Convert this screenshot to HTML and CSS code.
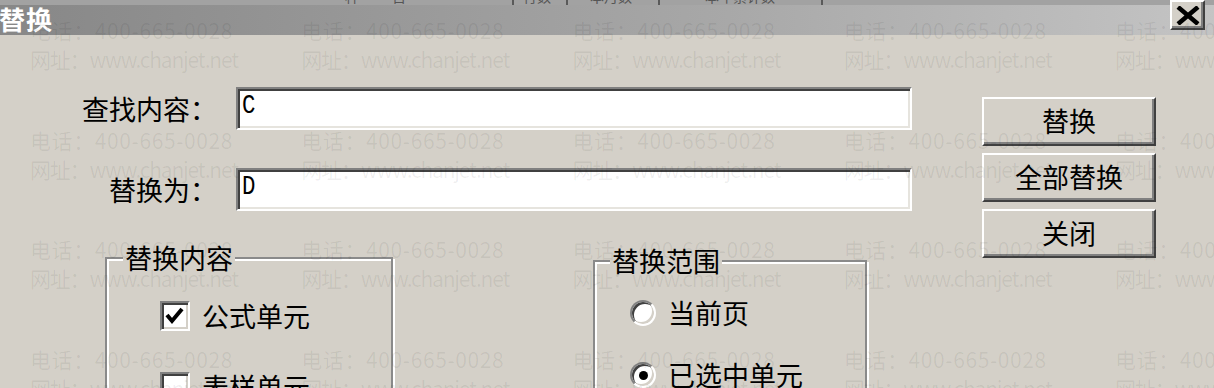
FILE: index.html
```html
<!DOCTYPE html>
<html lang="zh-CN">
<head>
<meta charset="utf-8">
<title>替换</title>
<link rel="stylesheet" href="styles.css">
</head>
<body>
<div class="header">
  <div class="strip">
    <span class="st st-a">种</span><span class="st st-b">百</span><span class="sep sep-a"></span><span class="st st-c">行数</span><span class="sep sep-b"></span><span class="st st-d">本月数</span><span class="sep sep-c"></span><span class="st st-e">本年累计数</span><span class="sep sep-d"></span>
  </div>
  <div class="title">替换</div>
  <button class="close" type="button" aria-label="关闭">
    <svg width="26" height="19" viewBox="0 0 26 19"><path d="M3 1 L23 18 M23 1 L3 18" stroke="#000" stroke-width="4.5" fill="none"/></svg>
  </button>
</div>

<div class="main">
  <div class="left">
    <div class="field">
      <span class="label">查找内容：</span>
      <div class="input"><span class="val">C</span></div>
    </div>
    <div class="field field-2">
      <span class="label">替换为：</span>
      <div class="input"><span class="val">D</span></div>
    </div>
    <div class="groups">
      <fieldset class="group g1">
        <legend class="g1-legend">替换内容</legend>
        <div class="opts">
          <div class="opt">
            <span class="check"><svg width="26" height="26" viewBox="0 0 26 26"><path d="M5 12 L10 18 L20 6" stroke="#000" stroke-width="4" fill="none"/></svg></span>
            <span class="opt-text">公式单元</span>
          </div>
          <div class="opt">
            <span class="check"></span>
            <span class="opt-text">表样单元</span>
          </div>
        </div>
      </fieldset>
      <fieldset class="group g2">
        <legend class="g2-legend">替换范围</legend>
        <div class="radios">
          <div class="opt radio-row">
            <span class="radio"></span>
            <span class="opt-text">当前页</span>
          </div>
          <div class="opt radio-row">
            <span class="radio on"><span class="dot"></span></span>
            <span class="opt-text">已选中单元</span>
          </div>
        </div>
      </fieldset>
    </div>
  </div>
  <div class="buttons">
    <button class="btn" type="button">替换</button>
    <button class="btn" type="button">全部替换</button>
    <button class="btn" type="button">关闭</button>
  </div>
</div>

<div class="watermark">
  <div class="wm"><div class="tel">电话：400-665-0028</div><div class="web">网址：www.chanjet.net</div></div>
  <div class="wm"><div class="tel">电话：400-665-0028</div><div class="web">网址：www.chanjet.net</div></div>
  <div class="wm"><div class="tel">电话：400-665-0028</div><div class="web">网址：www.chanjet.net</div></div>
  <div class="wm"><div class="tel">电话：400-665-0028</div><div class="web">网址：www.chanjet.net</div></div>
  <div class="wm"><div class="tel">电话：400-665-0028</div><div class="web">网址：www.chanjet.net</div></div>
  <div class="wm"><div class="tel">电话：400-665-0028</div><div class="web">网址：www.chanjet.net</div></div>
  <div class="wm"><div class="tel">电话：400-665-0028</div><div class="web">网址：www.chanjet.net</div></div>
  <div class="wm"><div class="tel">电话：400-665-0028</div><div class="web">网址：www.chanjet.net</div></div>
  <div class="wm"><div class="tel">电话：400-665-0028</div><div class="web">网址：www.chanjet.net</div></div>
  <div class="wm"><div class="tel">电话：400-665-0028</div><div class="web">网址：www.chanjet.net</div></div>
  <div class="wm"><div class="tel">电话：400-665-0028</div><div class="web">网址：www.chanjet.net</div></div>
  <div class="wm"><div class="tel">电话：400-665-0028</div><div class="web">网址：www.chanjet.net</div></div>
  <div class="wm"><div class="tel">电话：400-665-0028</div><div class="web">网址：www.chanjet.net</div></div>
  <div class="wm"><div class="tel">电话：400-665-0028</div><div class="web">网址：www.chanjet.net</div></div>
  <div class="wm"><div class="tel">电话：400-665-0028</div><div class="web">网址：www.chanjet.net</div></div>
  <div class="wm"><div class="tel">电话：400-665-0028</div><div class="web">网址：www.chanjet.net</div></div>
  <div class="wm"><div class="tel">电话：400-665-0028</div><div class="web">网址：www.chanjet.net</div></div>
  <div class="wm"><div class="tel">电话：400-665-0028</div><div class="web">网址：www.chanjet.net</div></div>
  <div class="wm"><div class="tel">电话：400-665-0028</div><div class="web">网址：www.chanjet.net</div></div>
  <div class="wm"><div class="tel">电话：400-665-0028</div><div class="web">网址：www.chanjet.net</div></div>
</div>
</body>
</html>
```

FILE: styles.css
```css
* { box-sizing: border-box; }

html, body {
  margin: 0;
  padding: 0;
}

body {
  width: 1214px;
  height: 388px;
  overflow: hidden;
  position: relative;
  background: #d4d0c8;
  color: #000;
  font-family: "Noto Sans CJK SC", "Liberation Sans", sans-serif;
}

/* ---------- title bar ---------- */
.header {
  height: 35px;
  display: grid;
  grid-template-columns: 1fr 35px;
  grid-template-rows: 5px 30px;
  padding-right: 9px;
  background:
    linear-gradient(#a2a2a2 0, #a2a2a2 5px, transparent 5px),
    linear-gradient(to right, #878787, #a8a8a8 60%, #c4c4c4);
}

.strip {
  grid-row: 1;
  grid-column: 1;
  display: flex;
  overflow: hidden;
  font-size: 14px;
  line-height: 14px;
  color: #555;
}
.st { margin-top: -11px; white-space: nowrap; }
.sep { width: 2px; height: 5px; background: #5a5a5a; flex: none; }
.st-a { margin-left: 345px; }
.st-b { margin-left: 33px; }
.sep-a { margin-left: 106px; }
.st-c { margin-left: 9px; }
.sep-b { margin-left: 15px; }
.st-d { margin-left: 22px; }
.sep-c { margin-left: 26px; }
.st-e { margin-left: 45px; }
.sep-d { margin-left: 46px; }

.title {
  grid-row: 2;
  grid-column: 1;
  margin-left: -1px;
  color: #fff;
  font-weight: bold;
  font-size: 26px;
  line-height: 28px;
  letter-spacing: 1px;
}

.close {
  grid-row: 1 / span 2;
  grid-column: 2;
  align-self: start;
  width: 35px;
  height: 30px;
  padding: 0;
  margin: 0;
  background: #d4d0c8;
  border: 2px solid;
  border-color: #fff #404040 #404040 #fff;
  box-shadow: inset -2px -2px 0 #808080;
  display: flex;
  align-items: center;
  justify-content: center;
}

/* ---------- body ---------- */
.main {
  display: flex;
  align-items: flex-start;
}

.left {
  width: 912px;
  padding-top: 52px;
}

.field {
  display: flex;
  align-items: center;
  height: 43px;
}
.field-2 { margin-top: 38px; }

.label {
  width: 217px;
  margin-right: 19px;
  text-align: right;
  font-size: 27px;
  line-height: 30px;
  white-space: nowrap;
}

.input {
  width: 676px;
  height: 43px;
  background: #fff;
  border: 2px solid;
  border-color: #808080 #fff #fff #808080;
  box-shadow: inset 2px 2px 0 #404040, inset -2px -2px 0 #e6e4de;
  display: flex;
  align-items: center;
  padding-left: 4px;
  padding-bottom: 6px;
}

.val {
  display: inline-block;
  font-family: "Liberation Mono", monospace;
  font-size: 28px;
  line-height: 30px;
  transform: scaleX(0.8);
  transform-origin: left center;
}

/* ---------- group boxes ---------- */
.groups {
  display: flex;
  align-items: flex-start;
  margin-top: 33px;
}

.group {
  margin: 0;
  padding: 0;
  min-width: 0;
  height: 200px;
  border: 2px solid #8a8a8a;
  box-shadow: inset 2px 2px 0 #fff, 2px 2px 0 #fff;
}
.g1 { margin-left: 105px; width: 288px; }
.g2 { margin-left: 200px; margin-top: 3px; width: 274px; }

.group legend {
  padding: 0 2px;
  font-size: 27px;
  line-height: 28px;
  background: #d4d0c8;
}
.g1-legend { margin-left: 16px; }
.g2-legend { margin-left: 15px; }

.opts {
  padding-top: 29px;
  padding-left: 53px;
  display: flex;
  flex-direction: column;
  gap: 41px;
}

.radios {
  padding-top: 25px;
  padding-left: 35px;
  display: flex;
  flex-direction: column;
  gap: 36px;
}

.opt {
  display: flex;
  align-items: center;
  height: 30px;
  gap: 12px;
}
.radio-row { height: 26px; }

.opt-text {
  font-size: 27px;
  line-height: 30px;
  white-space: nowrap;
}

.check {
  width: 30px;
  height: 30px;
  flex: none;
  background: #fff;
  border: 2px solid;
  border-color: #808080 #fff #fff #808080;
  box-shadow: inset 2px 2px 0 #404040, inset -2px -2px 0 #d4d0c8;
  display: flex;
  align-items: center;
  justify-content: center;
}

.radio {
  width: 26px;
  height: 26px;
  flex: none;
  border-radius: 50%;
  background: #fff;
  border: 2px solid;
  border-color: #808080 #fff #fff #808080;
  box-shadow: inset 2px 2px 0 #404040, inset -2px -2px 0 #d4d0c8;
  display: flex;
  align-items: center;
  justify-content: center;
}
.dot {
  width: 9px;
  height: 9px;
  border-radius: 50%;
  background: #000;
}

/* ---------- buttons ---------- */
.buttons {
  margin-left: 70px;
  padding-top: 62px;
  display: flex;
  flex-direction: column;
  gap: 7px;
}

.btn {
  width: 174px;
  height: 49px;
  margin: 0;
  padding: 0 0 2px;
  background: #d4d0c8;
  color: #000;
  font-family: "Noto Sans CJK SC", sans-serif;
  font-size: 27px;
  line-height: 30px;
  border: 2px solid;
  border-color: #fff #404040 #404040 #fff;
  box-shadow: inset -2px -2px 0 #808080;
}

/* ---------- watermark overlay ---------- */
.watermark {
  position: absolute;
  top: 0;
  left: 0;
  padding-left: 30px;
  padding-top: 16px;
  display: grid;
  grid-template-columns: repeat(5, 271.25px);
  grid-auto-rows: 109.7px;
  pointer-events: none;
  color: rgba(0, 0, 0, 0.065);
  font-family: "Noto Sans CJK SC", sans-serif;
  font-size: 21px;
  line-height: 29px;
  white-space: nowrap;
}
.tel { letter-spacing: 0.6px; }
.web { letter-spacing: -1.2px; }
```
